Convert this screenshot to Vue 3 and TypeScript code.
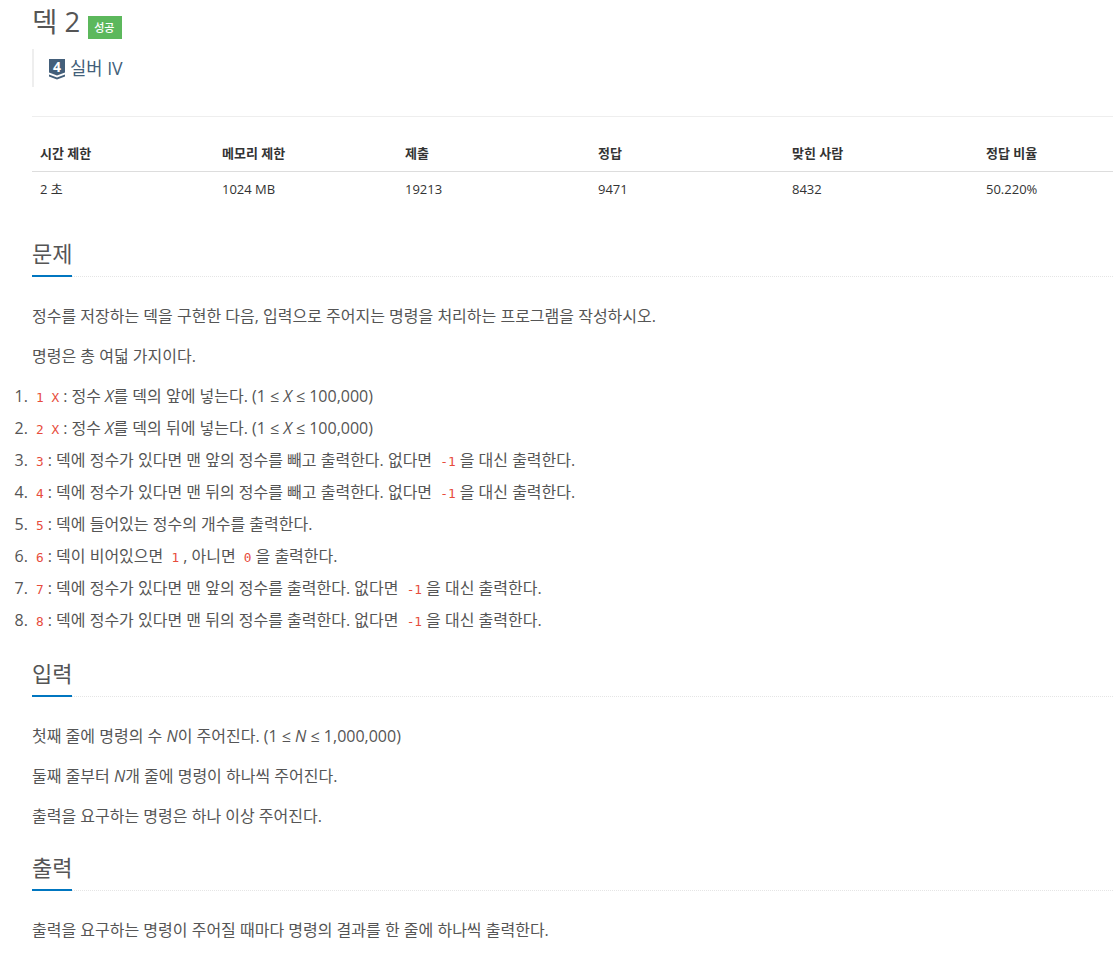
<script setup lang="ts">
const columns = [
  { head: '시간 제한', value: '2 초', width: '182px' },
  { head: '메모리 제한', value: '1024 MB', width: '183px' },
  { head: '제출', value: '19213', width: '193px' },
  { head: '정답', value: '9471', width: '194px' },
  { head: '맞힌 사람', value: '8432', width: '194px' },
  { head: '정답 비율', value: '50.220%', width: 'auto' },
]
</script>

<template>
  <main class="page">
    <div class="title-row">
      <h1 class="title">덱 2</h1>
      <span class="label">성공</span>
    </div>
    <blockquote class="tier">
      <svg class="tier__icon" viewBox="0 0 16 20" width="16" height="20">
        <path d="M0 0H16V13.5L8 16.5L0 13.5Z" fill="#435f7a" />
        <path d="M0 15.5L8 18.5L16 15.5V17.5L8 20.5L0 17.5Z" fill="#435f7a" />
        <text x="8" y="12.5" text-anchor="middle" class="tier__num">4</text>
      </svg>
      <span class="tier__text">실버 IV</span>
    </blockquote>
    <hr class="rule" />

    <table class="info">
      <thead>
        <tr>
          <th v-for="c in columns" :key="c.head" :style="{ width: c.width }">{{ c.head }}</th>
        </tr>
      </thead>
      <tbody>
        <tr>
          <td v-for="c in columns" :key="c.head">{{ c.value }}</td>
        </tr>
      </tbody>
    </table>

    <section class="section">
      <div class="headline"><h2>문제</h2></div>
      <p class="first">정수를 저장하는 덱을 구현한 다음, 입력으로 주어지는 명령을 처리하는 프로그램을 작성하시오.</p>
      <p>명령은 총 여덟 가지이다.</p>
      <ol>
        <li><code>1 X</code>: 정수 <i>X</i>를 덱의 앞에 넣는다. (1 ≤ <i>X</i> ≤ 100,000)</li>
        <li><code>2 X</code>: 정수 <i>X</i>를 덱의 뒤에 넣는다. (1 ≤ <i>X</i> ≤ 100,000)</li>
        <li><code>3</code>: 덱에 정수가 있다면 맨 앞의 정수를 빼고 출력한다. 없다면 <code>-1</code>을 대신 출력한다.</li>
        <li><code>4</code>: 덱에 정수가 있다면 맨 뒤의 정수를 빼고 출력한다. 없다면 <code>-1</code>을 대신 출력한다.</li>
        <li><code>5</code>: 덱에 들어있는 정수의 개수를 출력한다.</li>
        <li><code>6</code>: 덱이 비어있으면 <code>1</code>, 아니면 <code>0</code>을 출력한다.</li>
        <li><code>7</code>: 덱에 정수가 있다면 맨 앞의 정수를 출력한다. 없다면 <code>-1</code>을 대신 출력한다.</li>
        <li><code>8</code>: 덱에 정수가 있다면 맨 뒤의 정수를 출력한다. 없다면 <code>-1</code>을 대신 출력한다.</li>
      </ol>
    </section>

    <section class="section">
      <div class="headline"><h2>입력</h2></div>
      <p class="first">첫째 줄에 명령의 수 <i>N</i>이 주어진다. (1 ≤ <i>N</i> ≤ 1,000,000)</p>
      <p>둘째 줄부터 <i>N</i>개 줄에 명령이 하나씩 주어진다.</p>
      <p>출력을 요구하는 명령은 하나 이상 주어진다.</p>
    </section>

    <section class="section">
      <div class="headline"><h2>출력</h2></div>
      <p class="first">출력을 요구하는 명령이 주어질 때마다 명령의 결과를 한 줄에 하나씩 출력한다.</p>
    </section>
  </main>
</template>

<style>
body {
  background: #fff;
  overflow: hidden;
}
</style>

<style scoped>
.page {
  padding: 0 0 0 32px;
  height: 960px;
  box-sizing: border-box;
  overflow: hidden;
  color: #555;
  font-family: 'Open Sans', 'Noto Sans CJK KR', sans-serif;
  font-size: 14px;
}

.title-row {
  display: flex;
  align-items: flex-start;
  gap: 8px;
  height: 49px;
}

.title {
  margin: 0;
  font-size: 27.5px;
  font-weight: 400;
  line-height: 43px;
}

.label {
  margin-top: 16px;
  padding: 0 6px;
  width: 22px;
  height: 23px;
  line-height: 24px;
  background: #5cb85c;
  color: #fff;
  font-size: 11px;
  font-weight: 500;
  white-space: nowrap;
}

.tier {
  margin: 0;
  padding: 0 0 0 15px;
  height: 38px;
  border-left: 2px solid #eee;
  display: flex;
  align-items: center;
  gap: 5px;
}

.tier__icon {
  overflow: visible;
  margin-top: 1px;
}

.tier__num {
  fill: #fff;
  font-size: 14px;
  font-weight: 700;
}

.tier__text {
  color: #435f7a;
  font-size: 17.7px;
  margin-top: -2px;
}

.rule {
  margin: 29px 0 0;
  border: 0;
  border-top: 1px solid #eee;
}

.info {
  margin: 20px 0 32px;
  width: 1081px;
  table-layout: fixed;
  border-collapse: collapse;
  font-size: 13px;
  color: #333;
}

.info th {
  box-sizing: border-box;
  padding: 7px 8px 9px;
  text-align: left;
  font-weight: 700;
  border-bottom: 1px solid #ddd;
  line-height: 18px;
}

.info td {
  padding: 8px;
  line-height: 18px;
}

.section {
  margin-top: 25px;
}

.headline {
  border-bottom: 1px dotted #e5e5e5;
}

.headline h2 {
  display: inline-block;
  vertical-align: bottom;
  margin: 0 0 -1px;
  padding-bottom: 7px;
  border-bottom: 2px solid #0076c0;
  font-size: 22px;
  font-weight: 400;
  line-height: 30px;
}

p {
  margin: 0 0 18px;
  font-size: 16px;
  line-height: 22px;
}

p.first {
  margin-top: 28px;
}

ol {
  margin: -5px 0 -3px -32px;
  padding: 0 0 0 32px;
  font-size: 16px;
}

li {
  line-height: 32px;
}

code {
  padding: 2px 4px;
  color: #e74c3c;
  font-family: 'DejaVu Sans Mono', monospace;
  font-size: 12.8px;
  line-height: 1;
}
</style>
